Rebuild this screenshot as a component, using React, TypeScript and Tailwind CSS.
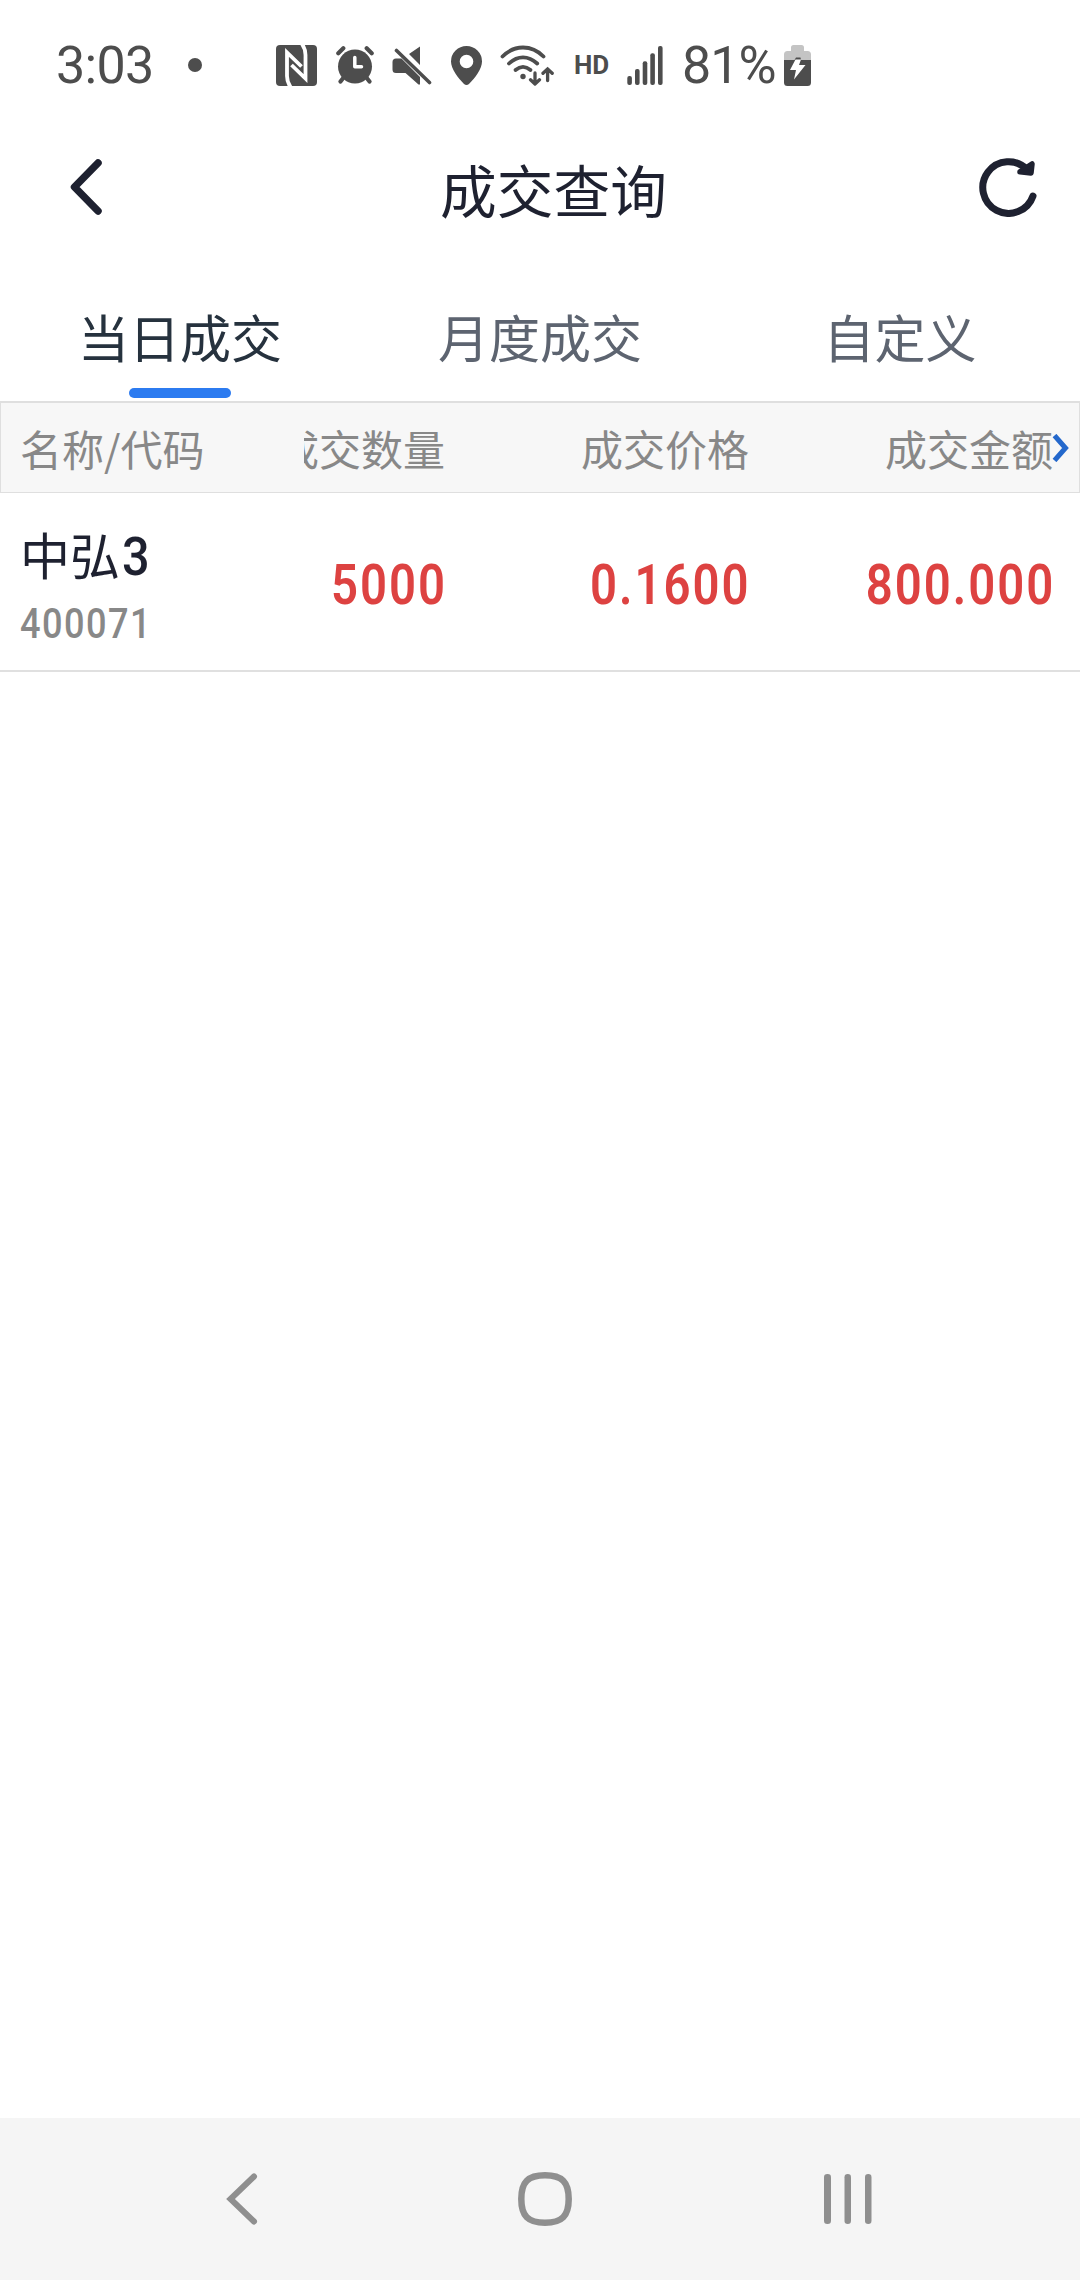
import type { ReactNode } from "react";

interface Trade {
  name: string;
  suffix: string;
  code: string;
  values: string[];
}

const tabs = ["当日成交", "月度成交", "自定义"];
const columns = ["成交数量", "成交价格", "成交金额"];
const trades: Trade[] = [
  {
    name: "中弘",
    suffix: "3",
    code: "400071",
    values: ["5000", "0.1600", "800.000"],
  },
];

export default function App() {
  return (
    <div className="flex flex-col w-[1080px] h-[2280px] overflow-hidden bg-white font-['Noto_Sans_CJK_SC',sans-serif]">
      <StatusBar />
      <Header />
      <Tabs />
      <TradeTable />
      <NavBar />
    </div>
  );
}

function StatusBar() {
  return (
    <div className="flex items-center h-[130px] pl-[56px] text-[#4d4d4d] font-[Roboto,sans-serif] shrink-0">
      <span className="w-[132px] pt-[2px] text-[52px] leading-[60px] tracking-[-0.7px]">
        3:03
      </span>
      <span className="w-[14px] h-[14px] rounded-full bg-[#4d4d4d]" />
      <NfcIcon />
      <AlarmIcon />
      <MuteIcon />
      <PinIcon />
      <WifiIcon />
      <span className="ml-[20px] w-[38px] text-[26px] leading-[30px] font-bold">
        HD
      </span>
      <SignalIcon />
      <span className="ml-[19px] w-[102px] pt-[2px] text-[52px] leading-[60px] tracking-[-1px]">
        81%
      </span>
      <BatteryIcon />
    </div>
  );
}

function Header() {
  return (
    <div className="flex items-center justify-between h-[160px] pl-[70px] pr-[43px] pb-[46px] text-[#1e2130] shrink-0">
      <svg width="33" height="58" viewBox="0 0 33 58" fill="none">
        <path
          d="M28 5 4.5 29 28 53"
          stroke="currentColor"
          strokeWidth="7.5"
          strokeLinecap="round"
          strokeLinejoin="round"
        />
      </svg>
      <h1 className="ml-[25px] pt-[2px] text-[56.7px] leading-[60px]">
        成交查询
      </h1>
      <svg width="58" height="60" viewBox="0 0 58 60" fill="none">
        <g
          stroke="currentColor"
          strokeWidth="7"
          strokeLinecap="round"
          strokeLinejoin="round"
        >
          <path d="M54 39A25.8 25.8 0 1 1 48 12.5" />
          <path d="M53 7 52 16 41 14.8Z" strokeWidth="5.5" fill="currentColor" />
        </g>
      </svg>
    </div>
  );
}

function Tabs() {
  return (
    <div className="grid grid-cols-3 h-[111px] shrink-0">
      {tabs.map((tab, index) => (
        <div
          key={tab}
          className={`flex flex-col items-center pt-[16px] text-[51px] leading-[60px] ${
            index === 0 ? "text-[#26323e]" : "text-[#5d6470]"
          }`}
        >
          <span>{tab}</span>
          {index === 0 && (
            <span className="w-[102px] h-[10px] mt-[22px] rounded-full bg-[#2c7bf0]" />
          )}
        </div>
      ))}
    </div>
  );
}

function TradeTable() {
  return (
    <div className="flex flex-col grow">
      <div className="relative flex items-center h-[92px] border border-t-2 border-[#dfdfdf] bg-[#f7f7f7] text-[42px] leading-[60px] text-[#888888]">
        <span className="w-[303px] pl-[19px] shrink-0">名称/代码</span>
        <ScrollCells>
          {columns.map((column) => (
            <Cell key={column}>{column}</Cell>
          ))}
        </ScrollCells>
        <svg
          className="absolute top-[31px] right-[9px]"
          width="18"
          height="28"
          viewBox="0 0 18 28"
          fill="none"
        >
          <path d="M2.5 1.5 13.5 14 2.5 26.5" stroke="#2468cc" strokeWidth="5" />
        </svg>
      </div>
      {trades.map((trade) => (
        <div
          key={trade.code}
          className="flex items-center h-[179px] border-b-2 border-[#e0e0e0]"
        >
          <div className="w-[304px] pt-[8px] pl-[20px] shrink-0">
            <p className="flex items-baseline h-[60px] text-[50px] leading-[60px] text-[#1e2130]">
              {trade.name}
              <span className="ml-[2px] text-[54px] font-medium origin-left scale-x-90 font-[Roboto,sans-serif]">
                {trade.suffix}
              </span>
            </p>
            <p className="mt-[16px] text-[42px] leading-[50px] tracking-[1.7px] font-medium origin-left scale-x-86 text-[#888888] font-[Roboto,sans-serif]">
              {trade.code}
            </p>
          </div>
          <ScrollCells>
            {trade.values.map((value) => (
              <Cell key={value}>
                <span className="inline-block -mr-[1px] pt-[6px] text-[55px] leading-[60px] tracking-[2.3px] font-semibold origin-right scale-x-86 text-[#dd4241] font-[Roboto,sans-serif]">
                  {value}
                </span>
              </Cell>
            ))}
          </ScrollCells>
        </div>
      ))}
    </div>
  );
}

// horizontally scrolled part of a row, the first column is partly cut off
function ScrollCells({ children }: { children: ReactNode }) {
  return (
    <div className="flex justify-end grow min-w-0 pr-[26px] overflow-hidden">
      {children}
    </div>
  );
}

function Cell({ children }: { children: ReactNode }) {
  return (
    <div className="w-[304px] text-right whitespace-nowrap shrink-0">
      {children}
    </div>
  );
}

function NavBar() {
  return (
    <div className="flex items-center h-[162px] pl-[225px] bg-[#f5f5f5] text-[#8f8f8f] shrink-0">
      <svg width="34" height="54" viewBox="0 0 34 54" fill="none">
        <path
          d="M29 4.5 5.5 27 29 49.5"
          stroke="currentColor"
          strokeWidth="6"
          strokeLinecap="round"
        />
      </svg>
      <svg className="ml-[259px]" width="54" height="54" viewBox="0 0 54 54" fill="none">
        <path
          d="M27 3.3C44 3.3 50.7 10 50.7 27S44 50.7 27 50.7 3.3 44 3.3 27 10 3.3 27 3.3Z"
          stroke="currentColor"
          strokeWidth="6.5"
        />
      </svg>
      <svg className="ml-[252px]" width="48" height="50" viewBox="0 0 48 50" fill="currentColor">
        <rect x="0" width="7" height="50" rx="3.3" />
        <rect x="20.5" width="6.5" height="50" rx="3.2" />
        <rect x="41" width="6.5" height="50" rx="3.2" />
      </svg>
    </div>
  );
}

function NfcIcon() {
  return (
    <svg className="ml-[74px]" width="41" height="41" viewBox="0 0 41 41">
      <rect width="41" height="41" rx="4" fill="#4d4d4d" />
      <path
        d="M14.5 42Q11 37 11 31V7.5L25.5 21.5M26 -1Q29.5 4 29.5 10V33.5L15.5 20"
        fill="none"
        stroke="#fff"
        strokeWidth="3.8"
      />
    </svg>
  );
}

function AlarmIcon() {
  return (
    <svg className="ml-[19px]" width="38" height="38" viewBox="0 0 38 38" fill="none">
      <circle cx="19" cy="20.5" r="17" fill="#4d4d4d" />
      <path
        d="M2.3 7.2 7.3 2.3M35.7 7.2 30.7 2.3M8 31 4.5 35.5M30 31 33.5 35.5"
        stroke="#4d4d4d"
        strokeWidth="4.2"
        strokeLinecap="round"
      />
      <path
        d="M18.8 11.5V20.8H25.5"
        stroke="#fff"
        strokeWidth="3.5"
        strokeLinecap="round"
        strokeLinejoin="round"
      />
    </svg>
  );
}

function MuteIcon() {
  return (
    <svg className="ml-[18px]" width="40" height="39" viewBox="0 0 40 39">
      <path
        d="M28 .5V19L17 8ZM4 12.5H9.5L28 31V38.5H26.5L13.5 27H4Q.5 27 .5 23.5V16Q.5 12.5 4 12.5Z"
        fill="#4d4d4d"
      />
      <path
        d="M4.5 4.5 37.5 36.5"
        stroke="#4d4d4d"
        strokeWidth="3.6"
        strokeLinecap="round"
      />
    </svg>
  );
}

function PinIcon() {
  return (
    <svg className="ml-[19px]" width="31" height="39" viewBox="0 0 31 39">
      <path
        fillRule="evenodd"
        d="M15.5 0A15.5 15.5 0 0 1 31 15.5C31 23 24 32 18 38Q15.5 40 13 38C7 32 0 23 0 15.5A15.5 15.5 0 0 1 15.5 0ZM15.5 8.7A6.8 6.8 0 1 0 15.5 22.3 6.8 6.8 0 1 0 15.5 8.7Z"
        fill="#4d4d4d"
      />
    </svg>
  );
}

function WifiIcon() {
  return (
    <svg className="ml-[18px]" width="54" height="41" viewBox="0 0 54 41" fill="none">
      <g stroke="#4d4d4d" strokeWidth="3.8" strokeLinecap="round">
        <path d="M2.5 11.5Q11.5 2.5 23 2.5T43.5 11.5" />
        <path d="M9 18.5Q15.5 12.3 23 12.3T37.2 18.5" />
        <path d="M15.5 25Q23 18.8 30.5 25" />
        <path d="M35 28V39M30.5 34.8 35 39 39.5 34.8M47.6 35.5V24.5M43 28.3 47.6 24 52.2 28.3" strokeWidth="3.3" />
      </g>
      <circle cx="23" cy="31.5" r="2.7" fill="#4d4d4d" />
    </svg>
  );
}

function SignalIcon() {
  return (
    <svg className="ml-[15px]" width="36" height="39" viewBox="0 0 36 39" fill="#4d4d4d">
      <rect x="0.3" y="30" width="4.6" height="9" rx="2" />
      <rect x="8" y="23" width="4.6" height="16" rx="2" />
      <rect x="15.7" y="15.3" width="4.6" height="23.7" rx="2" />
      <rect x="23.3" y="7.3" width="4.6" height="31.7" rx="2" />
      <rect x="31" y="0" width="4.6" height="39" rx="2" />
    </svg>
  );
}

function BatteryIcon() {
  return (
    <svg width="27" height="41" viewBox="0 0 27 41">
      <path
        d="M7 6V2.5Q7 0 9.5 0H17.5Q20 0 20 2.5V6H23.5Q27 6 27 9.5V15H0V9.5Q0 6 3.5 6Z"
        fill="#c4c4c4"
      />
      <path
        d="M0 15H10.5L12 12.5H16.5L17 15H27V37.5Q27 41 23.5 41H3.5Q0 41 0 37.5Z"
        fill="#4d4d4d"
      />
      <path d="M11.5 14.5H17L15 20H21.5L10 34.5 12 25H6Z" fill="#fff" />
    </svg>
  );
}
